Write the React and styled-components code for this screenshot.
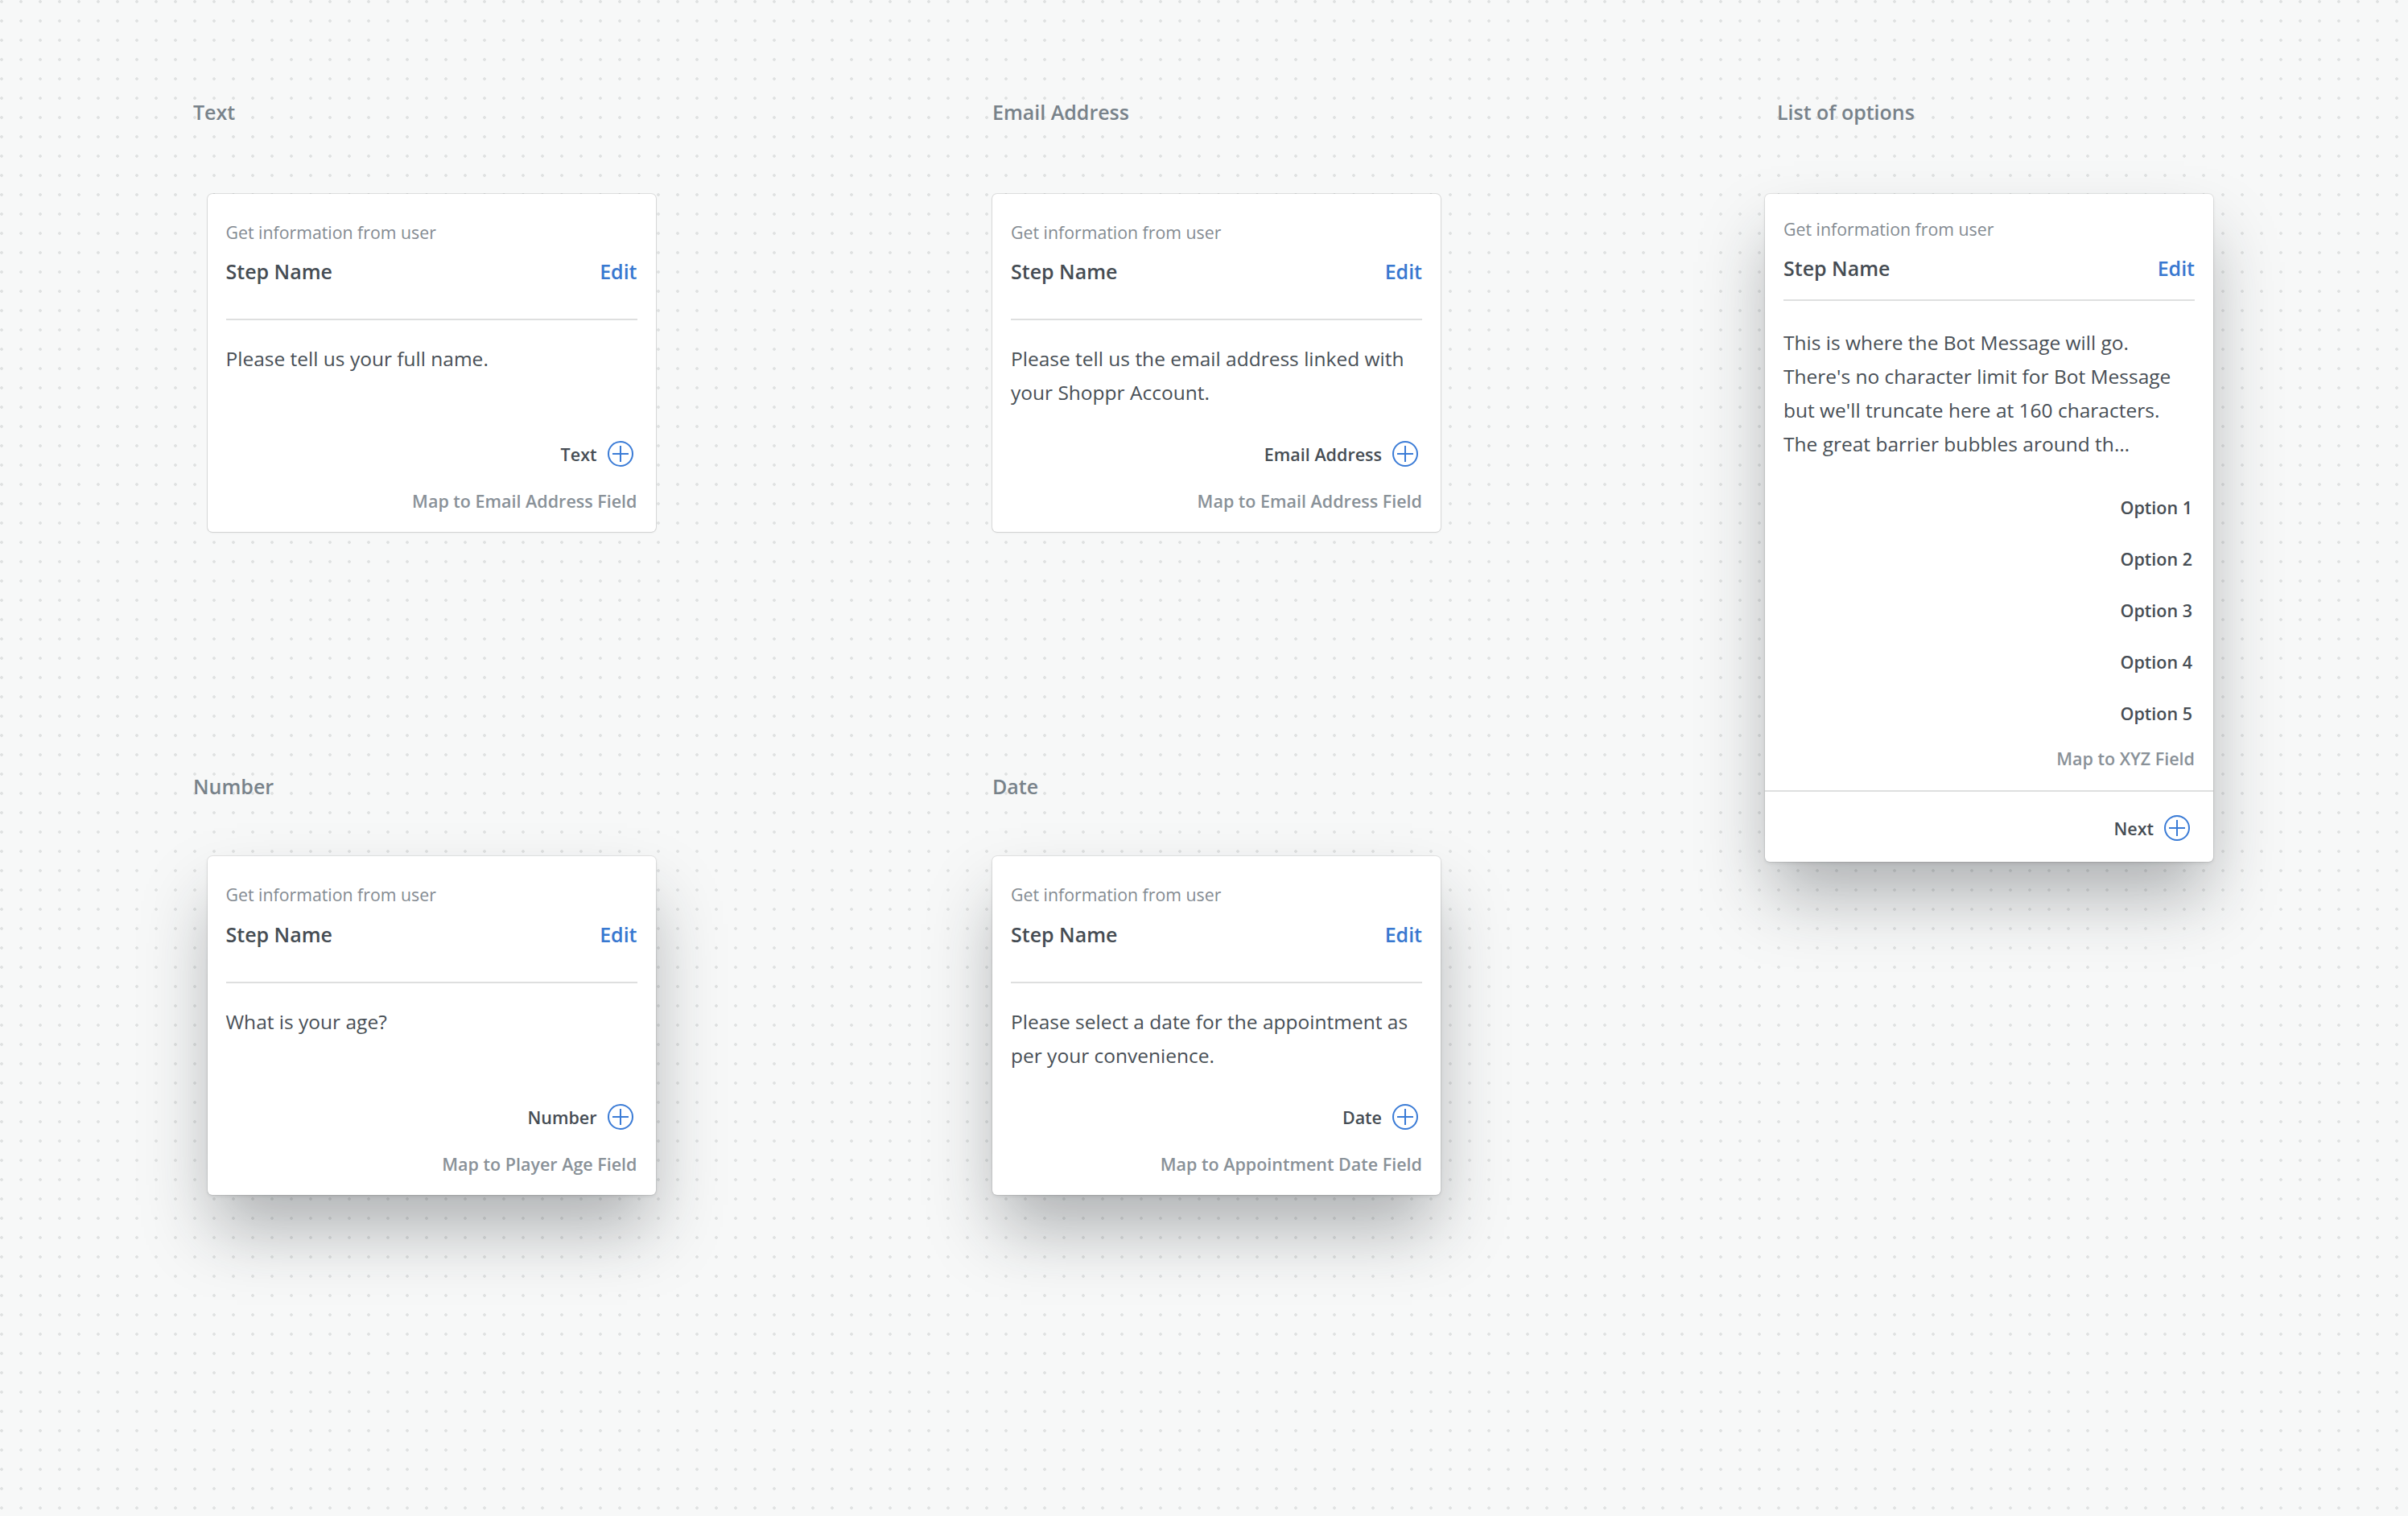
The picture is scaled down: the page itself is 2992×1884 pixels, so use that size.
import styled, { createGlobalStyle } from 'styled-components'

const GlobalStyle = createGlobalStyle`
  html, body {
    margin: 0;
    padding: 0;
  }
  body {
    background: #f7f8f8;
    font-family: "Open Sans", "Noto Sans", sans-serif;
    -webkit-font-smoothing: antialiased;
  }
`

// dotted drafting board behind the flow steps
const Canvas = styled.main`
  min-height: 1884px;
  box-sizing: border-box;
  padding: 121.5px 0 0 240px;
  display: flex;
  align-items: flex-start;
  background-color: #f7f8f8;
  background-image: radial-gradient(circle, #dfe1e1 0, #dfe1e1 1.5px, transparent 2.2px);
  background-size: 24px 24px;
  background-position: -10px -10px;
`

const Column = styled.div`
  flex: none;
  width: ${p => (p.$width ? `${p.$width}px` : 'auto')};
  display: flex;
  flex-direction: column;
`

const Section = styled.section`
  display: flex;
  flex-direction: column;
  align-items: flex-start;
  margin-top: ${p => p.$top || 0}px;
`

const SectionTitle = styled.h2`
  margin: 0 0 0 ${p => p.$indent || 0}px;
  font-size: 25px;
  line-height: 34px;
  font-weight: 600;
  color: #78828a;
`

const Card = styled.div`
  box-sizing: border-box;
  width: 557px;
  margin: ${p => p.$gap}px 0 0 ${p => p.$indent || 0}px;
  padding: ${p => p.$padTop}px 23px ${p => p.$padBottom}px;
  background: #fff;
  border-radius: 6px;
  box-shadow: ${p =>
    p.$raised
      ? '0 0 0 1px rgba(0,0,0,0.07), 0 2px 4px rgba(0,0,0,0.08), 0 48px 80px -8px rgba(30,36,42,0.34)'
      : '0 0 0 1px rgba(0,0,0,0.1), 0 1px 3px rgba(0,0,0,0.08)'};
`

const Kicker = styled.div`
  font-size: 21.3px;
  line-height: 30px;
  color: #848b92;
`

const HeaderRow = styled.div`
  display: flex;
  justify-content: space-between;
  align-items: baseline;
  margin-top: 16.3px;
  font-size: 25px;
  line-height: 34px;
  font-weight: 600;
`

const StepName = styled.span`
  color: #454c53;
`

const EditLink = styled.a`
  color: #3878d0;
  text-decoration: none;
  cursor: pointer;
`

const Rule = styled.div`
  height: 2px;
  background: #dedfdf;
  margin: ${p => p.$gap}px ${p => (p.$bleed ? -23 : 0)}px 0;
`

const Message = styled.p`
  margin: ${p => p.$gap}px 0 0;
  font-size: 24.5px;
  line-height: 42px;
  color: #484f56;
  height: ${p => (p.$fixed ? `${p.$fixed}px` : 'auto')};
`

const ActionRow = styled.div`
  display: flex;
  justify-content: flex-end;
  align-items: center;
  gap: 13px;
  height: 34px;
  margin-top: ${p => p.$gap || 0}px;
  padding-right: ${p => p.$inset || 5}px;
  font-size: 21.5px;
  font-weight: 600;
  color: #464d54;
`

const MapField = styled.div`
  margin-top: ${p => p.$gap}px;
  text-align: right;
  font-size: 21.5px;
  line-height: 30px;
  font-weight: 600;
  color: #899198;
`

const OptionList = styled.ul`
  list-style: none;
  margin: 43px 0 0;
  padding: 0 3px 0 0;
  display: flex;
  flex-direction: column;
  align-items: flex-end;
  gap: 34px;
`

const Option = styled.li`
  font-size: 21.5px;
  line-height: 30px;
  font-weight: 600;
  color: #464d54;
`

const AddIcon = styled.svg`
  flex: none;
  width: 32px;
  height: 32px;
`

function PlusCircle() {
  return (
    <AddIcon viewBox="0 0 32 32" fill="none" stroke="#3a7bd6" strokeWidth="2">
      <circle cx="16" cy="16" r="15" />
      <path d="M16 6v20M6 16h20" />
    </AddIcon>
  )
}

function StepHeader() {
  return (
    <>
      <Kicker>Get information from user</Kicker>
      <HeaderRow>
        <StepName>Step Name</StepName>
        <EditLink>Edit</EditLink>
      </HeaderRow>
    </>
  )
}

function InputStep({ title, indent, top, gap, raised, message, type, field }) {
  return (
    <Section $top={top}>
      <SectionTitle>{title}</SectionTitle>
      <Card $gap={gap} $indent={indent} $raised={raised} $padTop={33} $padBottom={23}>
        <StepHeader />
        <Rule $gap={42} />
        <Message $gap={27} $fixed={122.5}>{message}</Message>
        <ActionRow>
          {type}
          <PlusCircle />
        </ActionRow>
        <MapField $gap={26.7}>{field}</MapField>
      </Card>
    </Section>
  )
}

const options = ['Option 1', 'Option 2', 'Option 3', 'Option 4', 'Option 5']

function OptionsStep() {
  return (
    <Section>
      <SectionTitle $indent={15}>List of options</SectionTitle>
      <Card $gap={85} $raised $padTop={29} $padBottom={25}>
        <StepHeader />
        <Rule $gap={22.7} />
        <Message $gap={30.5}>
          This is where the Bot Message will go.
          <br />
          There's no character limit for Bot Message
          <br />
          but we'll truncate here at 160 characters.
          <br />
          The great barrier bubbles around th…
        </Message>
        <OptionList>
          {options.map(o => (
            <Option key={o}>{o}</Option>
          ))}
        </OptionList>
        <MapField $gap={26}>Map to XYZ Field</MapField>
        <Rule $gap={24.3} $bleed />
        <ActionRow $gap={28} $inset={6}>
          Next
          <PlusCircle />
        </ActionRow>
      </Card>
    </Section>
  )
}

export default function App() {
  return (
    <>
      <GlobalStyle />
      <Canvas>
        <Column $width={993}>
          <InputStep
            title="Text"
            indent={17.5}
            gap={85}
            message="Please tell us your full name."
            type="Text"
            field="Map to Email Address Field"
          />
          <InputStep
            title="Number"
            indent={17.5}
            top={299.5}
            gap={70}
            raised
            message="What is your age?"
            type="Number"
            field="Map to Player Age Field"
          />
        </Column>
        <Column $width={960}>
          <InputStep
            title="Email Address"
            gap={85}
            message="Please tell us the email address linked with your Shoppr Account."
            type="Email Address"
            field="Map to Email Address Field"
          />
          <InputStep
            title="Date"
            top={299.5}
            gap={70}
            raised
            message="Please select a date for the appointment as per your convenience."
            type="Date"
            field="Map to Appointment Date Field"
          />
        </Column>
        <Column>
          <OptionsStep />
        </Column>
      </Canvas>
    </>
  )
}
